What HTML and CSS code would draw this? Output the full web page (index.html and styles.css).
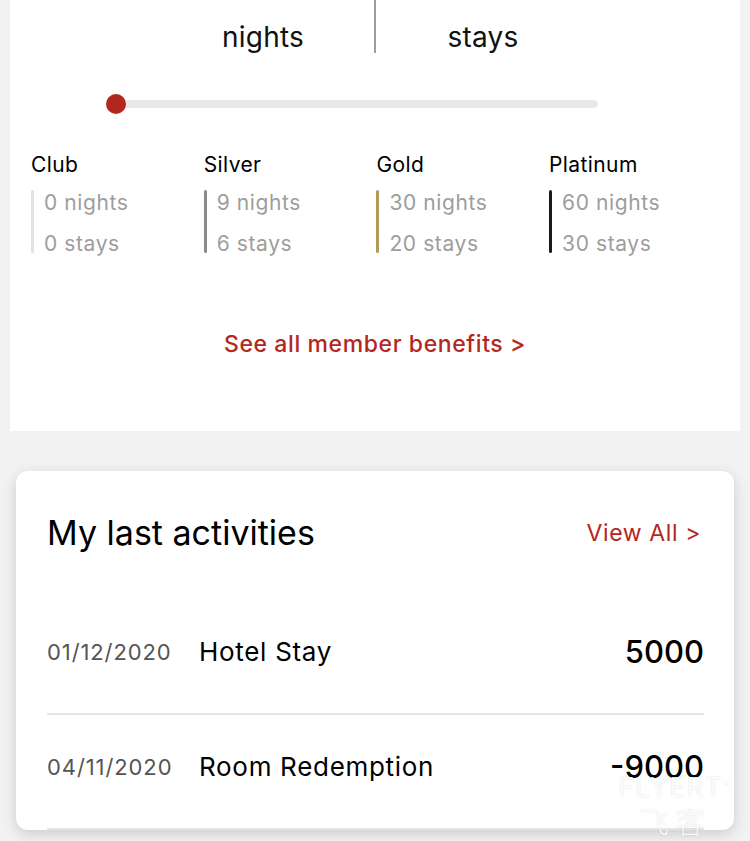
FILE: index.html
```html
<!DOCTYPE html>
<html lang="en">
<head>
<meta charset="utf-8">
<title>Membership</title>
<link rel="stylesheet" href="styles.css">
</head>
<body>
<section class="panel">
  <div class="head">
    <div class="head-cell head-left">nights</div>
    <div class="head-divider"></div>
    <div class="head-cell head-right">stays</div>
  </div>
  <div class="slider">
    <div class="track"></div>
    <div class="knob"></div>
  </div>
  <div class="tiers">
    <div class="tier">
      <div class="tier-name">Club</div>
      <div class="tier-body">
        <span class="tier-bar bar-club"></span>
        <div class="tier-stats"><div>0 nights</div><div>0 stays</div></div>
      </div>
    </div>
    <div class="tier">
      <div class="tier-name">Silver</div>
      <div class="tier-body">
        <span class="tier-bar bar-silver"></span>
        <div class="tier-stats"><div>9 nights</div><div>6 stays</div></div>
      </div>
    </div>
    <div class="tier">
      <div class="tier-name">Gold</div>
      <div class="tier-body">
        <span class="tier-bar bar-gold"></span>
        <div class="tier-stats"><div>30 nights</div><div>20 stays</div></div>
      </div>
    </div>
    <div class="tier">
      <div class="tier-name">Platinum</div>
      <div class="tier-body">
        <span class="tier-bar bar-platinum"></span>
        <div class="tier-stats"><div>60 nights</div><div>30 stays</div></div>
      </div>
    </div>
  </div>
  <a class="benefits" href="#">See all member benefits &gt;</a>
</section>

<section class="card">
  <div class="card-head">
    <h2 class="card-title">My last activities</h2>
    <a class="view-all" href="#">View All &gt;</a>
  </div>
  <div class="rows">
    <div class="row">
      <span class="date">01/12/2020</span>
      <span class="desc">Hotel Stay</span>
      <span class="amount">5000</span>
    </div>
    <div class="row">
      <span class="date">04/11/2020</span>
      <span class="desc">Room Redemption</span>
      <span class="amount">-9000</span>
    </div>
  </div>
</section>

<div class="watermark" aria-hidden="true">
  <div class="wm-en">FLYERT<sup>+</sup></div>
  <div class="wm-cn">飞客</div>
</div>
</body>
</html>
```

FILE: styles.css
```css
* { box-sizing: border-box; }

html, body {
  margin: 0;
  padding: 0;
  background: #f2f2f2;
  font-family: Inter, "Noto Sans", "Liberation Sans", sans-serif;
  color: #000;
  overflow: hidden;
}

body { position: relative; height: 841px; }

.panel {
  margin: 0 10px;
  height: 431px;
  background: #fff;
  display: flex;
  flex-direction: column;
}

.head {
  display: flex;
  height: 53px;
  padding-left: 142px;
}

.head-cell {
  font-size: 28px;
  line-height: 28px;
  padding-top: 23px;
  color: #111;
  text-align: center;
  letter-spacing: 0.2px;
}

.head-left { width: 222px; }
.head-right { width: 214px; }

.head-divider {
  width: 2px;
  height: 53px;
  background: #9d9d9d;
}

.slider {
  position: relative;
  margin: 41px 0 0 96px;
  width: 492px;
  height: 20px;
}

.track {
  position: absolute;
  left: 10px;
  right: 0;
  top: 6px;
  height: 8px;
  border-radius: 4px;
  background: #e9e9e9;
}

.knob {
  position: absolute;
  left: 0;
  top: 0;
  width: 20px;
  height: 20px;
  border-radius: 50%;
  background: #b2271f;
}

.tiers {
  display: grid;
  grid-template-columns: repeat(4, 172.7px);
  padding-left: 21px;
  margin-top: 39px;
}

.tier-name {
  font-size: 21px;
  line-height: 24px;
  letter-spacing: 0.4px;
  color: #000;
}

.tier-body {
  display: flex;
  margin-top: 5px;
}

.tier-bar {
  width: 3px;
  height: 63px;
  margin-top: 8px;
  border-radius: 2px;
  flex: none;
}

.bar-club { background: #e2e2e2; }
.bar-silver { background: #8a8a8a; }
.bar-gold { background: #b39a58; }
.bar-platinum { background: #161b22; }

.tier-stats {
  margin-left: 10px;
  font-size: 21px;
  line-height: 41px;
  letter-spacing: 0.6px;
  color: #9d9d9d;
}

.benefits {
  align-self: center;
  margin-top: 66px;
  font-size: 23px;
  line-height: 28px;
  letter-spacing: 0.6px;
  color: #b5261e;
  text-decoration: none;
  font-weight: 500;
}

.card {
  margin: 40px 16px 0;
  height: 359px;
  background: #fff;
  border-radius: 12px;
  box-shadow: 0 4px 14px rgba(0, 0, 0, 0.16);
  overflow: hidden;
}

.card-head {
  height: 129px;
  padding: 0 33px 5px 31px;
  display: flex;
  align-items: center;
  justify-content: space-between;
}

.card-title {
  margin: 0;
  font-size: 34px;
  line-height: 40px;
  font-weight: 400;
  color: #000;
}

.view-all {
  font-size: 23px;
  line-height: 28px;
  letter-spacing: 0.6px;
  color: #b5261e;
  text-decoration: none;
}

.rows {
  padding: 0 30px 0 31px;
}

.row {
  height: 115px;
  padding-bottom: 10px;
  border-bottom: 2px solid #e6e6ea;
  display: flex;
  align-items: center;
}

.date {
  width: 152px;
  flex: none;
  font-size: 22px;
  line-height: 30px;
  letter-spacing: 0.9px;
  color: #555;
}

.desc {
  flex: 1;
  font-size: 26px;
  line-height: 30px;
  letter-spacing: 0.7px;
  color: #000;
}

.amount {
  font-size: 31px;
  line-height: 34px;
  font-weight: 500;
  color: #000;
}

.watermark {
  position: absolute;
  left: 612px;
  top: 768px;
  width: 126px;
  text-align: center;
  color: rgba(255, 255, 255, 0.9);
  text-shadow: 0 0 2px rgba(0, 0, 0, 0.14);
  font-weight: 300;
  pointer-events: none;
}

.wm-en {
  font-size: 27px;
  line-height: 30px;
  letter-spacing: 1px;
}

.wm-en sup { font-size: 12px; }

.wm-cn {
  font-family: "Noto Sans CJK SC", sans-serif;
  font-weight: 300;
  font-size: 30px;
  line-height: 34px;
  letter-spacing: 6px;
}
```
